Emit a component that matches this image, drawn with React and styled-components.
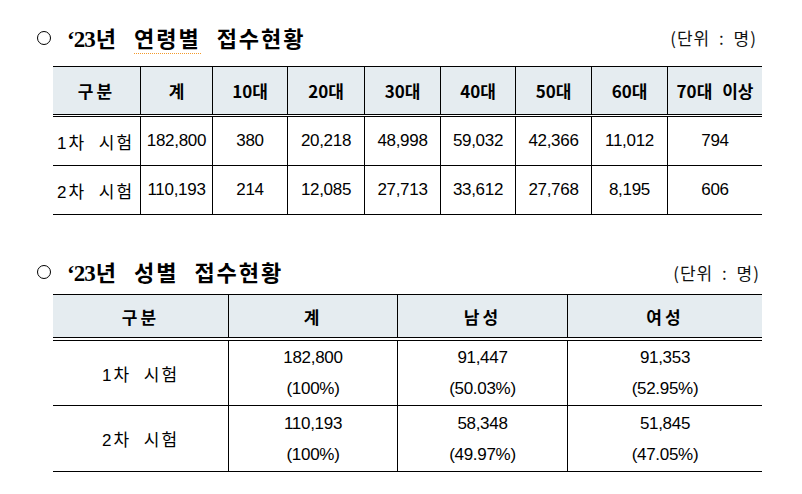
import React from 'react'
import styled, { createGlobalStyle } from 'styled-components'

const GlobalStyle = createGlobalStyle`
  html, body {
    margin: 0;
    padding: 0;
    background: #fff;
  }
  body {
    font-family: "Liberation Sans", "Noto Sans CJK KR", sans-serif;
    color: #000;
  }
`

const ageCols = [87, 72, 75, 77, 76, 75, 76, 76, 95]
const genderCols = [175, 169, 170, 195]

const ageHead = ['구분', '계', '10대', '20대', '30대', '40대', '50대', '60대', '70대 이상']
const ageRows = [
  ['1차 시험', '182,800', '380', '20,218', '48,998', '59,032', '42,366', '11,012', '794'],
  ['2차 시험', '110,193', '214', '12,085', '27,713', '33,612', '27,768', '8,195', '606'],
]

const genderHead = ['구분', '계', '남성', '여성']
const genderRows = [
  ['1차 시험', ['182,800', '(100%)'], ['91,447', '(50.03%)'], ['91,353', '(52.95%)']],
  ['2차 시험', ['110,193', '(100%)'], ['58,348', '(49.97%)'], ['51,845', '(47.05%)']],
]

function App() {
  return (
    <Page>
      <GlobalStyle />
      <TitleRow>
        <Title>
          <Bullet />
          <TitleText>
            <Quote>‘23</Quote>년 <Squiggle>연령별</Squiggle> 접수현황
          </TitleText>
        </Title>
        <Unit>(단위 : 명)</Unit>
      </TitleRow>

      <Table $mt={15}>
        <Row $cols={ageCols} $head $h={47} $double={3}>
          {ageHead.map((h, i) => (
            <HeadCell key={h} $spread={i === 0}>{h}</HeadCell>
          ))}
        </Row>
        {ageRows.map(r => (
          <Row key={r[0]} $cols={ageCols} $h={48}>
            {r.map((c, i) =>
              i === 0 ? <LabelCell key={i}>{c}</LabelCell> : <Cell key={i}>{c}</Cell>
            )}
          </Row>
        ))}
      </Table>

      <TitleRow $mt={42}>
        <Title>
          <Bullet />
          <TitleText>
            <Quote>‘23</Quote>년 성별 접수현황
          </TitleText>
        </Title>
        <Unit $shift={3}>(단위 : 명)</Unit>
      </TitleRow>

      <Table $mt={9}>
        <Row $cols={genderCols} $head $h={42} $double={4}>
          {genderHead.map(h => (
            <HeadCell key={h} $spread>{h}</HeadCell>
          ))}
        </Row>
        {genderRows.map((r, ri) => (
          <Row key={r[0]} $cols={genderCols} $h={ri === 0 ? 64 : 65}>
            <Cell $label>{r[0]}</Cell>
            {r.slice(1).map((c, i) => (
              <StackCell key={i}>
                <span>{c[0]}</span>
                <span>{c[1]}</span>
              </StackCell>
            ))}
          </Row>
        ))}
      </Table>
    </Page>
  )
}

export default App

const Page = styled.div`
  width: 802px;
  height: 494px;
  overflow: hidden;
  padding-top: 23px;
  box-sizing: border-box;
`

const TitleRow = styled.div`
  display: flex;
  align-items: center;
  justify-content: space-between;
  height: 28px;
  margin-top: ${p => p.$mt || 0}px;
  padding: 0 45px 0 37px;
`

const Title = styled.div`
  display: flex;
  align-items: center;
  gap: 16px;
`

const Bullet = styled.span`
  width: 12px;
  height: 12px;
  border: 1.6px solid #000;
  border-radius: 50%;
  margin-top: 1px;
`

const TitleText = styled.span`
  font-family: "Noto Sans CJK KR", sans-serif;
  font-weight: 700;
  font-size: 22px;
  letter-spacing: 2px;
  word-spacing: 9px;
  white-space: pre;
`

const Quote = styled.span`
  font-family: "Liberation Serif", serif;
  font-size: 23px;
  letter-spacing: -1px;
  margin-right: 1px;
`

const Squiggle = styled.span`
  border-bottom: 1.5px dotted #f39a2c;
`

const Unit = styled.span`
  font-family: "Noto Sans CJK KR", sans-serif;
  font-size: 17px;
  letter-spacing: 1px;
  word-spacing: 4px;
  color: #111;
  margin-top: ${p => p.$shift || 0}px;
  margin-right: ${p => (p.$shift ? -3 : 0)}px;
`

const Table = styled.div`
  margin: ${p => p.$mt}px 0 0 53px;
  width: 709px;
`

const Row = styled.div`
  display: grid;
  grid-template-columns: ${p => p.$cols.map(c => c + 'px').join(' ')};
  height: ${p => p.$h}px;
  background: ${p => (p.$head ? '#e5ecf0' : '#fff')};
  border-top: ${p => (p.$head ? '1px solid #000' : 'none')};
  border-bottom: ${p => (p.$double ? `${p.$double}px double #000` : '1px solid #000')};
  background-clip: padding-box;

  > * + * {
    border-left: 1px solid #000;
  }
`

const HeadCell = styled.div`
  display: flex;
  align-items: center;
  justify-content: center;
  font-family: "Noto Sans CJK KR", sans-serif;
  font-weight: 700;
  font-size: 17px;
  letter-spacing: ${p => (p.$spread ? '3px' : '0')};
  word-spacing: 6px;
  white-space: pre;
`

const Cell = styled.div`
  display: flex;
  align-items: center;
  justify-content: center;
  font-size: 17px;
  letter-spacing: ${p => (p.$label ? '2px' : '-0.3px')};
  word-spacing: ${p => (p.$label ? '6px' : '0')};
  white-space: pre;
`

const LabelCell = styled(Cell)`
  justify-content: flex-start;
  padding-left: 4px;
  letter-spacing: 2px;
  word-spacing: 6px;
`

const StackCell = styled.div`
  display: flex;
  flex-direction: column;
  align-items: center;
  justify-content: center;
  font-size: 17px;
  line-height: 31px;
  letter-spacing: -0.3px;
`
